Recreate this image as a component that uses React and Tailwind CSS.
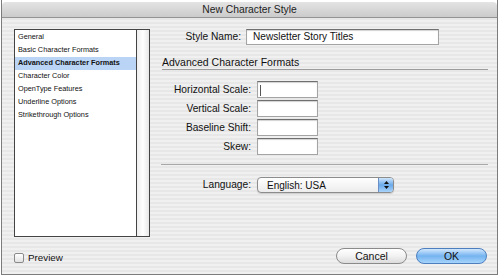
import React from "react";

const items = [
  "General",
  "Basic Character Formats",
  "Advanced Character Formats",
  "Character Color",
  "OpenType Features",
  "Underline Options",
  "Strikethrough Options",
];

const scaleFields = ["Horizontal Scale:", "Vertical Scale:", "Baseline Shift:", "Skew:"];

function TextBox({ caret, className = "" }) {
  return (
    <div
      className={
        "relative bg-white border border-[#a4a4a4] border-t-[#6f6f6f] shadow-[inset_0_1px_1px_rgba(0,0,0,0.18)] " +
        className
      }
    >
      {caret && <span className="absolute left-[2px] top-[3px] h-[11px] w-px bg-[#555]" />}
    </div>
  );
}

export default function App() {
  return (
    <div className="w-[500px] h-[277px] bg-white font-['Liberation_Sans',Arial,sans-serif] text-[#111]">
      <div className="ml-px w-[497px] h-[275px] flex flex-col border-x border-b border-[#7c7c7c] bg-[image:repeating-linear-gradient(180deg,#f0f0f0_0px,#f0f0f0_2px,#e7e7e7_2px,#e7e7e7_4px)]">
        {/* title bar */}
        <div className="h-[18px] bg-white">
          <div className="mt-[2px] h-[16px] flex items-center justify-center rounded-t-[4px] border-b border-[#939393] bg-gradient-to-b from-[#e4e4e4] to-[#cbcbcb] text-[10.3px] text-[#222]">
            New Character Style
          </div>
        </div>

        <div className="flex flex-1 flex-col pt-[11px] pl-[12px] pr-[9px]">
          <div className="flex h-[208px]">
            {/* category list */}
            <div className="w-[136px] h-[208px] flex border border-[#444] bg-white">
              <div className="w-[122px] pt-px border-r border-[#444] text-[7.3px]">
                {items.map((item, i) =>
                  i === 2 ? (
                    <div key={item} className="h-[13px] flex items-center pl-[3px] bg-[#b9d4f5] font-bold">
                      {item}
                    </div>
                  ) : (
                    <div key={item} className="h-[13px] flex items-center pl-[3px]">
                      {item}
                    </div>
                  )
                )}
              </div>
              <div className="flex-1 bg-gradient-to-r from-[#eeeeee] via-white to-[#e8e8e8]" />
            </div>

            {/* form */}
            <div className="ml-[11px] flex-1 flex flex-col text-[10.2px]">
              <div className="flex items-center h-[16px]">
                <div className="w-[80px] text-right">Style Name:</div>
                <div className="ml-[5px] w-[193px] h-[16px] flex items-center pl-[6px] bg-white border border-[#a4a4a4] border-t-[#6f6f6f] shadow-[inset_0_1px_1px_rgba(0,0,0,0.18)] text-[10.1px]">
                  Newsletter Story Titles
                </div>
              </div>

              <div className="mt-[12px] ml-px h-[13px] flex items-center border-b border-[#9c9c9c] text-[10.5px]">
                Advanced Character Formats
              </div>

              <div className="mt-[11px] flex flex-col gap-[2px]">
                {scaleFields.map((label, i) => (
                  <div key={label} className="flex items-center h-[17px]">
                    <div className="w-[90px] text-right">{label}</div>
                    <TextBox caret={i === 0} className="ml-[6px] w-[61px] h-[17px]" />
                  </div>
                ))}
              </div>

              <div className="mt-[9px] border-b border-[#a8a8a8]" />

              <div className="mt-[12px] flex items-center h-[16px]">
                <div className="w-[90px] text-right">Language:</div>
                <div className="ml-[6px] w-[137px] h-[16px] flex rounded-[4px] border border-[#8c8c8c] bg-gradient-to-b from-white to-[#ececec] shadow-[0_1px_1px_rgba(0,0,0,0.15)] overflow-hidden">
                  <div className="flex-1 flex items-center pl-[9px] text-[10px]">English: USA</div>
                  <div className="w-[15px] flex items-center justify-center border-l border-[#6b8fc4] bg-gradient-to-b from-[#cfe5fb] via-[#6aa9ea] to-[#a9d3fa]">
                    <svg width="7" height="10" viewBox="0 0 7 10">
                      <path d="M3.5 1 L6 4 L1 4 Z" fill="#111" />
                      <path d="M3.5 9 L6 6 L1 6 Z" fill="#111" />
                    </svg>
                  </div>
                </div>
              </div>
            </div>
          </div>

          {/* bottom bar */}
          <div className="mt-[11px] flex items-center h-[16px]">
            <div className="mt-[4px] w-[10px] h-[10px] rounded-[2px] border border-[#8a8a8a] bg-gradient-to-b from-white to-[#e2e2e2]" />
            <div className="ml-[4px] mt-[4px] text-[9.8px]">Preview</div>
            <div className="ml-auto flex gap-[9px] mr-[1px]">
              <button className="w-[71px] h-[16px] rounded-full border border-[#8a8a8a] bg-gradient-to-b from-white via-[#f2f2f2] to-[#dcdcdc] text-[10.5px] leading-none text-[#111]">
                Cancel
              </button>
              <button className="w-[71px] h-[16px] rounded-full border border-[#4d7fbf] bg-gradient-to-b from-[#d2e8fd] via-[#74b3ef] to-[#a6d4fb] text-[10.5px] leading-none text-[#111]">
                OK
              </button>
            </div>
          </div>
        </div>
      </div>
    </div>
  );
}
